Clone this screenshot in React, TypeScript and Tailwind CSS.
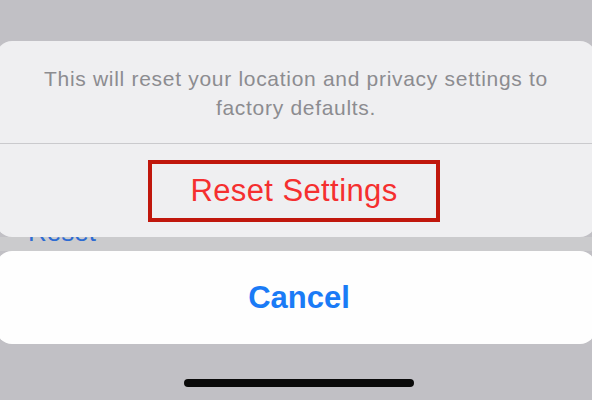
export default function App() {
  return (
    <div
      className="w-[592px] h-[400px] bg-[#c1c0c5] flex flex-col overflow-hidden"
      style={{ fontFamily: '"Liberation Sans", Arial, sans-serif' }}
    >
      <div className="h-[41px] shrink-0" />
      <div className="shrink-0 mx-[-4px] bg-[#efeff1] rounded-[16px] flex flex-col">
        <div className="pt-[23px] pb-[21px] px-[30px] text-center text-[21px] tracking-[0.7px] leading-[29px] text-[#8c8c90]">
          This will reset your location and privacy settings to
          <br />
          factory defaults.
        </div>
        <div className="h-px bg-[#cacacd]" />
        <div className="h-[93px] flex items-center justify-center">
          <div className="w-[292px] h-[62px] border-[4px] border-[#c0170c] flex items-center justify-center mr-[4px]">
            <span className="text-[31px] leading-none text-[#f52f2f] tracking-[0.4px]">
              Reset Settings
            </span>
          </div>
        </div>
      </div>
      <div className="h-[14px] shrink-0 bg-[#cbcbcd] overflow-hidden pl-[28px]">
        <div className="mt-[-18px] text-[26px] leading-[26px] text-[#2d6bd3]">Reset</div>
      </div>
      <div className="shrink-0 mx-[-4px] h-[93px] bg-[#fefefe] rounded-[16px] flex items-center justify-center">
        <span className="text-[31px] leading-none font-bold text-[#1a7bf6] ml-[6px]">Cancel</span>
      </div>
      <div className="shrink-0 pt-[35px] pl-[184px]">
        <div className="w-[230px] h-[8px] rounded-full bg-[#0a0a0a]" />
      </div>
    </div>
  );
}
